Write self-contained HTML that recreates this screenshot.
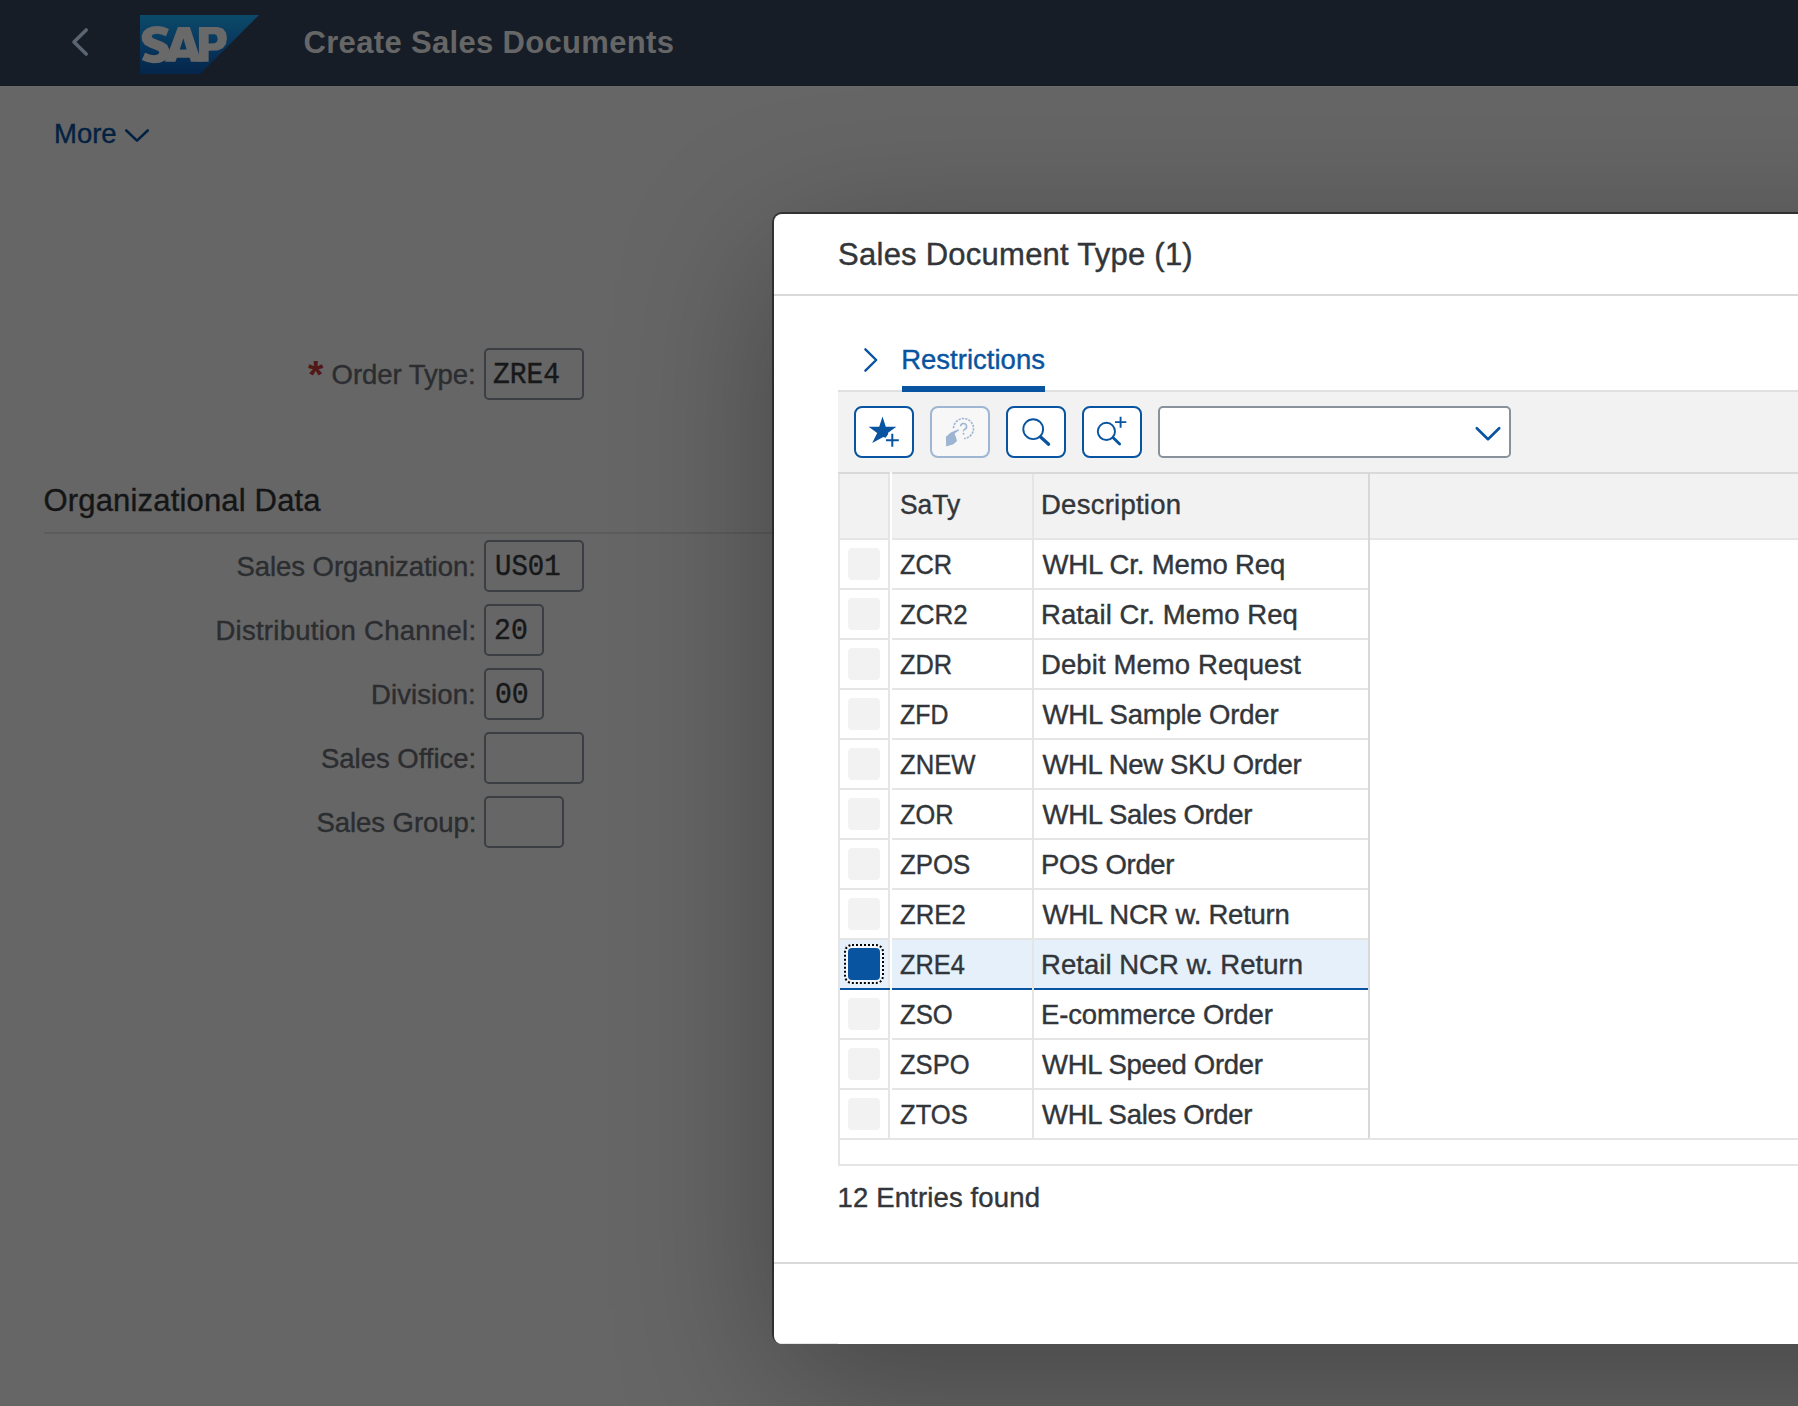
<!DOCTYPE html>
<html>
<head>
<meta charset="utf-8">
<title>Create Sales Documents</title>
<style>
html,body{margin:0;padding:0;width:1798px;height:1406px;overflow:hidden;}
#root{width:1798px;height:1406px;overflow:hidden;position:relative;background:#666666;}
body{background:#666666;font-family:"Liberation Sans",sans-serif;}
.abs{position:absolute;}
.t{position:absolute;white-space:nowrap;line-height:1;-webkit-text-stroke:0.4px currentColor;}
.m{position:absolute;white-space:nowrap;line-height:1;font-family:"Liberation Mono",monospace;-webkit-text-stroke:0.45px currentColor;}
#hdr{left:0;top:0;width:1798px;height:86px;background:#161d27;}
#hdrline{left:0;top:84px;width:1798px;height:2px;background:linear-gradient(#161d27,#131a24);}
#hdrline2{left:0;top:86px;width:1798px;height:1px;background:#6a6a6a;}
.inp{position:absolute;box-sizing:border-box;border:2px solid #3b3e42;border-radius:5px;background:#666666;height:52px;}
#dlg{left:774px;top:214px;width:1500px;height:1130px;background:#ffffff;border-radius:8px;
 box-shadow:0 40px 160px 0 rgba(0,0,0,0.33);}
#ring{left:772px;top:212px;width:1500px;height:1132px;box-sizing:border-box;border:2px solid rgba(0,0,0,0.47);border-bottom-width:0;border-radius:10px;}
.hl{position:absolute;background:#e5e5e5;height:2px;}
.vl{position:absolute;background:#e5e5e5;width:2px;}
.sel{position:absolute;left:848px;width:32px;height:32px;border-radius:4px;background:#f2f2f2;}
.btn{position:absolute;top:406px;width:60px;height:52px;box-sizing:border-box;border:2px solid #0854a0;border-radius:8px;background:#fff;}
</style>
</head>
<body>
<div id="root">
<div class="abs" id="hdr"></div><div class="abs" id="hdrline"></div><div class="abs" id="hdrline2"></div>
<svg class="abs" style="left:60px;top:20px" width="40" height="44" viewBox="60 20 40 44"><path d="M86.2 30 L74 42 L86.2 54" fill="none" stroke="#5b6471" stroke-width="3.6" stroke-linecap="round" stroke-linejoin="round"/></svg>
<svg class="abs" style="left:140px;top:15px" width="119" height="59" viewBox="0 0 119 59">
 <defs><linearGradient id="sg" x1="0" y1="0" x2="0" y2="1"><stop offset="0" stop-color="#0c4a69"/><stop offset="0.5" stop-color="#07375d"/><stop offset="1" stop-color="#05254b"/></linearGradient></defs>
 <path d="M0 0 H119 L60 59 H0 Z" fill="url(#sg)"/>
 <path fill="#696969" d="M28.9 13.94 L23.48 11.78 L17.69 10.91 L11.91 11.49 L6.85 13.44 L3.23 16.69 L1.64 21.03 L2.15 26.09 L4.68 29.71 L9.74 32.6 L15.52 34.77 L18.78 36.36 L19.28 38.02 L17.69 39.54 L14.08 40.26 L9.74 39.54 L5.04 37.66 L1.78 44.89 L6.85 46.92 L13.35 48.15 L19.86 47.64 L24.92 45.61 L28.18 42.36 L29.41 38.38 L29.12 34.05 L27.09 29.85 L22.75 26.96 L16.97 24.65 L12.78 22.91 L11.55 21.03 L12.99 19.44 L16.97 18.86 L21.31 19.58 L26.01 21.17 Z"/><path fill="#696969" fill-rule="evenodd" d="M37.94 11.99 L49.87 11.99 L61.44 46.7 L50.95 46.7 L49.65 42.72 L36.85 42.72 L35.41 46.7 L24.92 46.7 Z M43.36 23.2 L46.61 34.41 L39.75 34.41 Z"/><path fill="#696969" fill-rule="evenodd" d="M58.91 11.99 L77.71 11.99 L82.77 13.44 L86.02 17.42 L86.96 23.2 L86.02 28.98 L82.77 33.32 L77.71 35.49 L68.67 35.85 L68.67 46.7 L58.91 46.7 Z M68.67 19.22 L74.81 19.22 L76.98 20.67 L77.71 23.92 L76.98 26.81 L74.81 28.26 L68.67 28.41 Z"/>
</svg>
<div class="t" id="title" style="left:303.5px;top:27px;font-size:31px;color:#666666;letter-spacing:0.329px;font-weight:bold;-webkit-text-stroke:0;">Create Sales Documents</div>
<div class="t" id="more" style="left:54.0px;top:120px;font-size:27.5px;color:#032242;letter-spacing:0.000px;">More</div>
<svg class="abs" style="left:120px;top:124px" width="34" height="24" viewBox="120 124 34 24"><path d="M126.3 130.5 L137 140.6 L147.7 130.5" fill="none" stroke="#032242" stroke-width="2.6" stroke-linecap="round" stroke-linejoin="round"/></svg>
<div class="t" id="ast" style="left:308px;top:355px;font-size:39.5px;color:#521717;font-weight:bold;-webkit-text-stroke:0;">*</div>
<div class="t" id="l0" style="left:331.6px;top:361px;font-size:27.5px;color:#2b2d30;letter-spacing:-0.060px;">Order Type:</div>
<div class="inp" style="left:484px;top:348px;width:100px;"></div>
<div class="m" id="m0" style="left:493.3px;top:361px;font-size:29px;color:#17181a;transform:scaleX(0.9630);transform-origin:0 0;">ZRE4</div>
<div class="t" id="org" style="left:43.5px;top:485px;font-size:31px;color:#141516;letter-spacing:0.172px;">Organizational Data</div>
<div class="abs" style="left:44px;top:532px;width:730px;height:2px;background:#5b5c5d;"></div>
<div class="t" id="l1" style="left:236.4px;top:553px;font-size:27.5px;color:#2b2d30;letter-spacing:-0.033px;">Sales Organization:</div>
<div class="inp" style="left:484px;top:540px;width:100px;"></div>
<div class="m" id="m1" style="left:494.7px;top:553px;font-size:29px;color:#17181a;transform:scaleX(0.9414);transform-origin:0 0;">US01</div>
<div class="t" id="l2" style="left:215.4px;top:617px;font-size:27.5px;color:#2b2d30;letter-spacing:0.270px;">Distribution Channel:</div>
<div class="inp" style="left:484px;top:604px;width:60px;"></div>
<div class="m" id="m2" style="left:493.7px;top:617px;font-size:29px;color:#17181a;transform:scaleX(0.9698);transform-origin:0 0;">20</div>
<div class="t" id="l3" style="left:371.0px;top:681px;font-size:27.5px;color:#2b2d30;letter-spacing:0.100px;">Division:</div>
<div class="inp" style="left:484px;top:668px;width:60px;"></div>
<div class="m" id="m3" style="left:494.7px;top:681px;font-size:29px;color:#17181a;transform:scaleX(0.9687);transform-origin:0 0;">00</div>
<div class="t" id="l4" style="left:321.0px;top:745px;font-size:27.5px;color:#2b2d30;letter-spacing:-0.017px;">Sales Office:</div>
<div class="inp" style="left:484px;top:732px;width:100px;"></div>
<div class="t" id="l5" style="left:316.6px;top:809px;font-size:27.5px;color:#2b2d30;letter-spacing:-0.073px;">Sales Group:</div>
<div class="inp" style="left:484px;top:796px;width:80px;"></div>
<div class="abs" id="ring"></div>
<div class="abs" id="dlg"></div>
<div class="abs" style="left:780px;top:1343px;width:58px;height:1px;background:#e6e6e6;"></div>
<div class="t" id="dt" style="left:838.1px;top:239px;font-size:31px;color:#32363a;letter-spacing:0.245px;">Sales Document Type (1)</div>
<div class="hl" style="left:774px;top:294px;width:1024px;background:#d9d9d9;"></div>
<svg class="abs" style="left:858px;top:344px" width="26" height="32" viewBox="858 344 26 32"><path d="M865.4 349.3 L876.2 360 L865.4 370.7" fill="none" stroke="#0854a0" stroke-width="2.4" stroke-linecap="round" stroke-linejoin="round"/></svg>
<div class="t" id="restr" style="left:901.2px;top:346px;font-size:27.5px;color:#0854a0;letter-spacing:0.009px;">Restrictions</div>
<div class="hl" style="left:838px;top:390px;width:960px;background:#e0e0e0;"></div>
<div class="abs" style="left:902px;top:386px;width:143px;height:6px;background:#0854a0;"></div>
<div class="abs" style="left:838px;top:392px;width:960px;height:80px;background:#f2f2f2;"></div>
<div class="btn" style="left:854px;"></div>
<div class="btn" style="left:930px;border-color:#9fb6d3;background:#f7f7f7;"></div>
<div class="btn" style="left:1006px;"></div>
<div class="btn" style="left:1082px;"></div>
<svg class="abs" style="left:838px;top:392px" width="320" height="80" viewBox="838 392 320 80">
<polygon points="882.5,416.6 885.8,426.7 896.4,426.7 887.8,432.9 888.3,433.9 885.6,437.7 883.3,437.0 872.2,443.0 877.2,432.9 868.6,426.7 879.2,426.7" fill="#0854a0"/>
<path d="M886 440.2 H898.8 M892.3 433.8 V446.7" stroke="#0854a0" stroke-width="2" fill="none"/>
<path d="M958.3 429.2 L959.2 430.3 L954.6 433.4 L956 437.2 L957 441 L953.4 444.2 L946.2 446.4 L945.9 436.8 L950.8 432.6 Z" fill="#9db4d3"/>
<path d="M953.5 428.2 A10 10 0 1 1 964.2 438.5" stroke="#9db4d3" stroke-width="1.6" fill="none" stroke-dasharray="2.3 1.1"/>
<path d="M960.6 426.3 A3.0 3.0 0 1 1 964.6 429.3 Q963.3 430 963.4 431.4" stroke="#9db4d3" stroke-width="1.5" fill="none"/>
<circle cx="963.5" cy="433.8" r="1.0" fill="#9db4d3"/>
<circle cx="1033.2" cy="429.2" r="9.9" stroke="#0854a0" stroke-width="1.9" fill="none"/>
<path d="M1040.6 437.0 L1048.6 444.2" stroke="#0854a0" stroke-width="3.3" stroke-linecap="round" fill="none"/>
<circle cx="1106.4" cy="431.4" r="8.6" stroke="#0854a0" stroke-width="1.9" fill="none"/>
<path d="M1113.2 437.8 L1119.6 444.0" stroke="#0854a0" stroke-width="2.9" stroke-linecap="round" fill="none"/>
<path d="M1115 422.1 H1126.3 M1120.6 416.7 V427.8" stroke="#0854a0" stroke-width="1.9" fill="none"/>
</svg>
<div class="abs" style="left:1158px;top:406px;width:353px;height:52px;box-sizing:border-box;border:2px solid #89919a;border-radius:5px;background:#fff;"></div>
<svg class="abs" style="left:1470px;top:420px" width="36" height="26" viewBox="1470 420 36 26"><path d="M1476.8 428.2 L1488 439.2 L1499.2 428.2" fill="none" stroke="#0854a0" stroke-width="2.6" stroke-linecap="round" stroke-linejoin="round"/></svg>
<div class="abs" style="left:838px;top:474px;width:960px;height:66px;background:#f2f2f2;"></div>
<div class="hl" style="left:838px;top:472px;width:960px;background:#d9d9d9;"></div>
<div class="hl" style="left:838px;top:538px;width:960px;"></div>
<div class="t" id="h1" style="left:899.5px;top:491px;font-size:27.5px;color:#32363a;transform:scaleX(0.9599);transform-origin:0 0;">SaTy</div>
<div class="t" id="h2" style="left:1041.0px;top:491px;font-size:27.5px;color:#32363a;letter-spacing:0.250px;">Description</div>
<div class="sel" style="top:548px;"></div>
<div class="t" id="a0" style="left:900.0px;top:551px;font-size:27.5px;color:#32363a;transform:scaleX(0.9222);transform-origin:0 0;">ZCR</div>
<div class="t" id="b0" style="left:1042.5px;top:551px;font-size:27.5px;color:#32363a;letter-spacing:-0.153px;">WHL Cr. Memo Req</div>
<div class="hl" style="left:838px;top:588px;width:530px;background:#e5e5e5;"></div>
<div class="sel" style="top:598px;"></div>
<div class="t" id="a1" style="left:900.0px;top:601px;font-size:27.5px;color:#32363a;transform:scaleX(0.9437);transform-origin:0 0;">ZCR2</div>
<div class="t" id="b1" style="left:1041.0px;top:601px;font-size:27.5px;color:#32363a;letter-spacing:0.094px;">Ratail Cr. Memo Req</div>
<div class="hl" style="left:838px;top:638px;width:530px;background:#e5e5e5;"></div>
<div class="sel" style="top:648px;"></div>
<div class="t" id="a2" style="left:900.0px;top:651px;font-size:27.5px;color:#32363a;transform:scaleX(0.9222);transform-origin:0 0;">ZDR</div>
<div class="t" id="b2" style="left:1041.0px;top:651px;font-size:27.5px;color:#32363a;letter-spacing:0.100px;">Debit Memo Request</div>
<div class="hl" style="left:838px;top:688px;width:530px;background:#e5e5e5;"></div>
<div class="sel" style="top:698px;"></div>
<div class="t" id="a3" style="left:900.0px;top:701px;font-size:27.5px;color:#32363a;transform:scaleX(0.9042);transform-origin:0 0;">ZFD</div>
<div class="t" id="b3" style="left:1042.5px;top:701px;font-size:27.5px;color:#32363a;letter-spacing:-0.187px;">WHL Sample Order</div>
<div class="hl" style="left:838px;top:738px;width:530px;background:#e5e5e5;"></div>
<div class="sel" style="top:748px;"></div>
<div class="t" id="a4" style="left:900.0px;top:751px;font-size:27.5px;color:#32363a;transform:scaleX(0.9323);transform-origin:0 0;">ZNEW</div>
<div class="t" id="b4" style="left:1042.5px;top:751px;font-size:27.5px;color:#32363a;letter-spacing:-0.363px;">WHL New SKU Order</div>
<div class="hl" style="left:838px;top:788px;width:530px;background:#e5e5e5;"></div>
<div class="sel" style="top:798px;"></div>
<div class="t" id="a5" style="left:900.0px;top:801px;font-size:27.5px;color:#32363a;transform:scaleX(0.9214);transform-origin:0 0;">ZOR</div>
<div class="t" id="b5" style="left:1042.5px;top:801px;font-size:27.5px;color:#32363a;letter-spacing:-0.321px;">WHL Sales Order</div>
<div class="hl" style="left:838px;top:838px;width:530px;background:#e5e5e5;"></div>
<div class="sel" style="top:848px;"></div>
<div class="t" id="a6" style="left:900.0px;top:851px;font-size:27.5px;color:#32363a;transform:scaleX(0.9394);transform-origin:0 0;">ZPOS</div>
<div class="t" id="b6" style="left:1041.0px;top:851px;font-size:27.5px;color:#32363a;letter-spacing:-0.312px;">POS Order</div>
<div class="hl" style="left:838px;top:888px;width:530px;background:#e5e5e5;"></div>
<div class="sel" style="top:898px;"></div>
<div class="t" id="a7" style="left:900.0px;top:901px;font-size:27.5px;color:#32363a;transform:scaleX(0.9350);transform-origin:0 0;">ZRE2</div>
<div class="t" id="b7" style="left:1042.5px;top:901px;font-size:27.5px;color:#32363a;letter-spacing:-0.238px;">WHL NCR w. Return</div>
<div class="hl" style="left:838px;top:938px;width:530px;background:#e5e5e5;"></div>
<div class="abs" style="left:840px;top:940px;width:528px;height:48px;background:#e5f0fa;"></div>
<div class="abs" style="left:844px;top:944px;width:40px;height:40px;box-sizing:border-box;border:2px dotted #000;border-radius:8px;background:#f1f7fc;"></div>
<div class="sel" style="top:948px;background:#0854a0;"></div>
<div class="t" id="a8" style="left:900.0px;top:951px;font-size:27.5px;color:#32363a;transform:scaleX(0.9217);transform-origin:0 0;">ZRE4</div>
<div class="t" id="b8" style="left:1041.0px;top:951px;font-size:27.5px;color:#32363a;letter-spacing:0.037px;">Retail NCR w. Return</div>
<div class="hl" style="left:838px;top:988px;width:530px;background:#0854a0;"></div>
<div class="sel" style="top:998px;"></div>
<div class="t" id="a9" style="left:900.0px;top:1001px;font-size:27.5px;color:#32363a;transform:scaleX(0.9324);transform-origin:0 0;">ZSO</div>
<div class="t" id="b9" style="left:1041.0px;top:1001px;font-size:27.5px;color:#32363a;letter-spacing:-0.133px;">E-commerce Order</div>
<div class="hl" style="left:838px;top:1038px;width:530px;background:#e5e5e5;"></div>
<div class="sel" style="top:1048px;"></div>
<div class="t" id="a10" style="left:900.0px;top:1051px;font-size:27.5px;color:#32363a;transform:scaleX(0.9286);transform-origin:0 0;">ZSPO</div>
<div class="t" id="b10" style="left:1042.0px;top:1051px;font-size:27.5px;color:#32363a;letter-spacing:-0.307px;">WHL Speed Order</div>
<div class="hl" style="left:838px;top:1088px;width:530px;background:#e5e5e5;"></div>
<div class="sel" style="top:1098px;"></div>
<div class="t" id="a11" style="left:900.0px;top:1101px;font-size:27.5px;color:#32363a;transform:scaleX(0.9306);transform-origin:0 0;">ZTOS</div>
<div class="t" id="b11" style="left:1042.0px;top:1101px;font-size:27.5px;color:#32363a;letter-spacing:-0.286px;">WHL Sales Order</div>
<div class="hl" style="left:838px;top:1138px;width:960px;background:#e5e5e5;"></div>
<div class="vl" style="left:838px;top:474px;height:692px;"></div>
<div class="vl" style="left:888px;top:474px;height:666px;"></div>
<div class="vl" style="left:1032px;top:474px;height:666px;"></div>
<div class="vl" style="left:1368px;top:474px;height:664px;background:#d8d8d8;"></div>
<div class="abs" style="left:890px;top:472px;width:2px;height:666px;background:#fff;"></div>
<div class="abs" style="left:888px;top:988px;width:2px;height:2px;background:#0854a0;"></div>
<div class="hl" style="left:838px;top:1164px;width:960px;"></div>
<div class="t" id="ent" style="left:837.5px;top:1184px;font-size:27.5px;color:#32363a;letter-spacing:0.147px;">12 Entries found</div>
<div class="hl" style="left:774px;top:1262px;width:1024px;background:#d9d9d9;"></div>
</div>
</body>
</html>
